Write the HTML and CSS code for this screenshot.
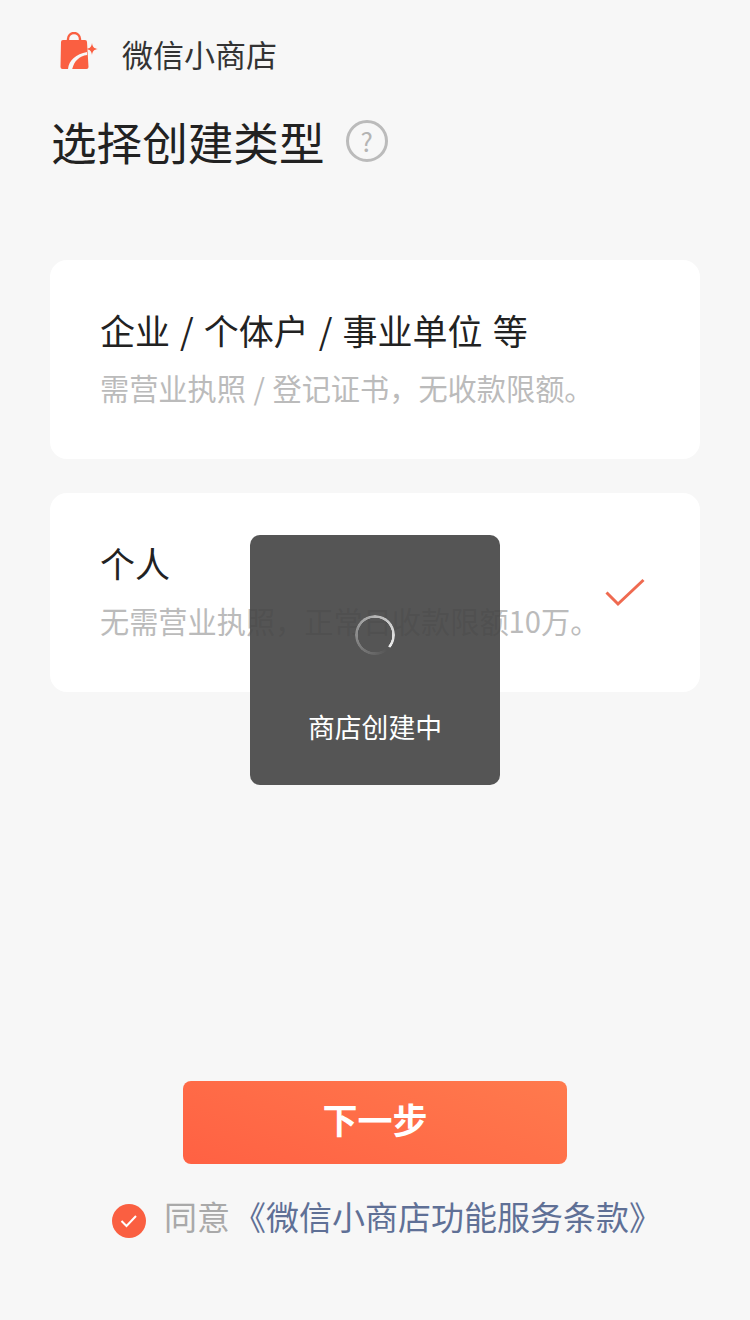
FILE: index.html
```html
<!DOCTYPE html>
<html lang="zh-CN">
<head>
  <meta charset="UTF-8">
  <meta name="viewport" content="width=device-width, initial-scale=1.0">
  <title>选择创建类型</title>
  <link rel="stylesheet" href="styles.css">
</head>
<body>
  <div class="page">
    <div class="brand">
      <svg class="brand-logo" width="38" height="38" viewBox="0 0 38 38">
        <path d="M8 11V7a6 6 0 0 1 12 0V11" fill="none" stroke="#fa5f41" stroke-width="2.400"/>
        <path d="M3 8h22a2 2 0 0 1 2 2l1.500 25a2 2 0 0 1-2 2H2.500a2 2 0 0 1-2-2L1 10a2 2 0 0 1 2-2z" fill="#fa5f41"/>
        <path d="M8 37c1-9 8-15 19-17l.2 3c-8 1-13 6-15 14z" fill="#f7f7f7"/>
        <path d="M32 11c.6 4 2 5.400 5.800 6-3.800.6-5.200 2-5.800 6-.6-4-2-5.400-5.800-6 3.800-.6 5.200-2 5.800-6z" fill="#fa5f41"/>
      </svg>
      <span class="brand-name">微信小商店</span>
    </div>

    <div class="heading">
      <h1>选择创建类型</h1>
      <span class="help">?</span>
    </div>

    <div class="options">
      <div class="option">
        <div class="option-title">企业 / 个体户 / 事业单位 等</div>
        <div class="option-desc">需营业执照 / 登记证书，无收款限额。</div>
      </div>
      <div class="option">
        <div class="option-title">个人</div>
        <div class="option-desc">无需营业执照，正常日收款限额10万。</div>
        <svg class="option-check" width="40" height="30" viewBox="0 0 40 30">
          <path d="M1.500 14.500L13 26 38.500 2" fill="none" stroke="#ef6a50" stroke-width="3"/>
        </svg>
      </div>
    </div>

    <div class="footer">
      <button class="next">下一步</button>
      <div class="agree">
        <span class="agree-check">
          <svg width="18" height="14" viewBox="0 0 18 14">
            <path d="M1.500 7L6.500 12 16 2" fill="none" stroke="#fff" stroke-width="2"/>
          </svg>
        </span>
        <span class="agree-text">同意</span>
        <span class="agree-link">《微信小商店功能服务条款》</span>
      </div>
    </div>

    <div class="toast">
      <div class="spinner"></div>
      <div class="toast-text">商店创建中</div>
    </div>
  </div>
</body>
</html>
```

FILE: styles.css
```css
* {
  box-sizing: border-box;
}
body {
  margin: 0;
  background: #f7f7f7;
  color: #222;
  font-family: "Noto Sans CJK SC", "Noto Sans", sans-serif;
}
.page {
  position: relative;
  height: 1320px;
  padding: 32px 50px 0;
  display: flex;
  flex-direction: column;
  overflow: hidden;
}
.brand {
  display: flex;
  align-items: center;
  height: 38px;
  padding-left: 10px;
  gap: 24px;
}
.brand-name {
  margin-top: 6px;
  font-size: 31px;
  line-height: 48px;
  color: #333;
}
.heading {
  display: flex;
  align-items: center;
  margin-top: 38px;
  padding-left: 1px;
  gap: 21px;
}
h1 {
  margin: 0;
  font-size: 45.600px;
  font-weight: 400;
  line-height: 66px;
  color: #222;
}
.help {
  width: 42px;
  height: 42px;
  border: 3px solid #bbb;
  border-radius: 50%;
  color: #b4b4b4;
  font-size: 26px;
  line-height: 36px;
  text-align: center;
}
.options {
  margin-top: 86px;
  display: flex;
  flex-direction: column;
  gap: 34px;
}
.option {
  position: relative;
  height: 199px;
  padding: 45px 50px 0;
  background: #fff;
  border-radius: 17px;
}
.option-title {
  font-size: 35px;
  line-height: 50px;
  word-spacing: 2.200px;
  color: #222;
}
.option-desc {
  margin-top: 11px;
  font-size: 29.200px;
  line-height: 42px;
  word-spacing: 1px;
  color: #bbb;
  white-space: nowrap;
}
.option-check {
  position: absolute;
  right: 55px;
  top: 85px;
}
.footer {
  margin-top: auto;
  margin-bottom: 79px;
  display: flex;
  flex-direction: column;
  align-items: center;
}
.next {
  width: 384px;
  height: 83px;
  padding: 0 0 8px;
  border: none;
  border-radius: 8px;
  background: linear-gradient(20deg, #ff6143, #ff7a4d);
  color: #fff;
  font-family: inherit;
  font-size: 35px;
  font-weight: 700;
}
.agree {
  margin-top: 27px;
  padding-left: 24px;
  display: flex;
  align-items: center;
  height: 50px;
  font-size: 33px;
  white-space: nowrap;
}
.agree-check {
  width: 34px;
  height: 34px;
  margin-right: 18px;
  margin-top: 9px;
  border-radius: 50%;
  background: #fa5f41;
  display: flex;
  align-items: center;
  justify-content: center;
}
.agree-text {
  margin-right: 3px;
  color: #a9a9a9;
}
.agree-link {
  color: #5f7096;
}
.toast {
  position: absolute;
  left: 250px;
  top: 535px;
  width: 250px;
  height: 250px;
  border-radius: 10px;
  background: rgba(70, 70, 70, 0.92);
  display: flex;
  flex-direction: column;
  align-items: center;
  padding-top: 80px;
}
.spinner {
  width: 40px;
  height: 40px;
  border-radius: 50%;
  background: conic-gradient(from 140deg, rgba(255, 255, 255, 0) 0deg, rgba(255, 255, 255, 0.3) 120deg, #eee 350deg, rgba(255, 255, 255, 0) 351deg);
  -webkit-mask: radial-gradient(closest-side, transparent 17px, #000 17.500px);
  mask: radial-gradient(closest-side, transparent 17px, #000 17.500px);
}
.toast-text {
  margin-top: 52px;
  font-size: 26.800px;
  line-height: 40px;
  color: #fff;
}
```
